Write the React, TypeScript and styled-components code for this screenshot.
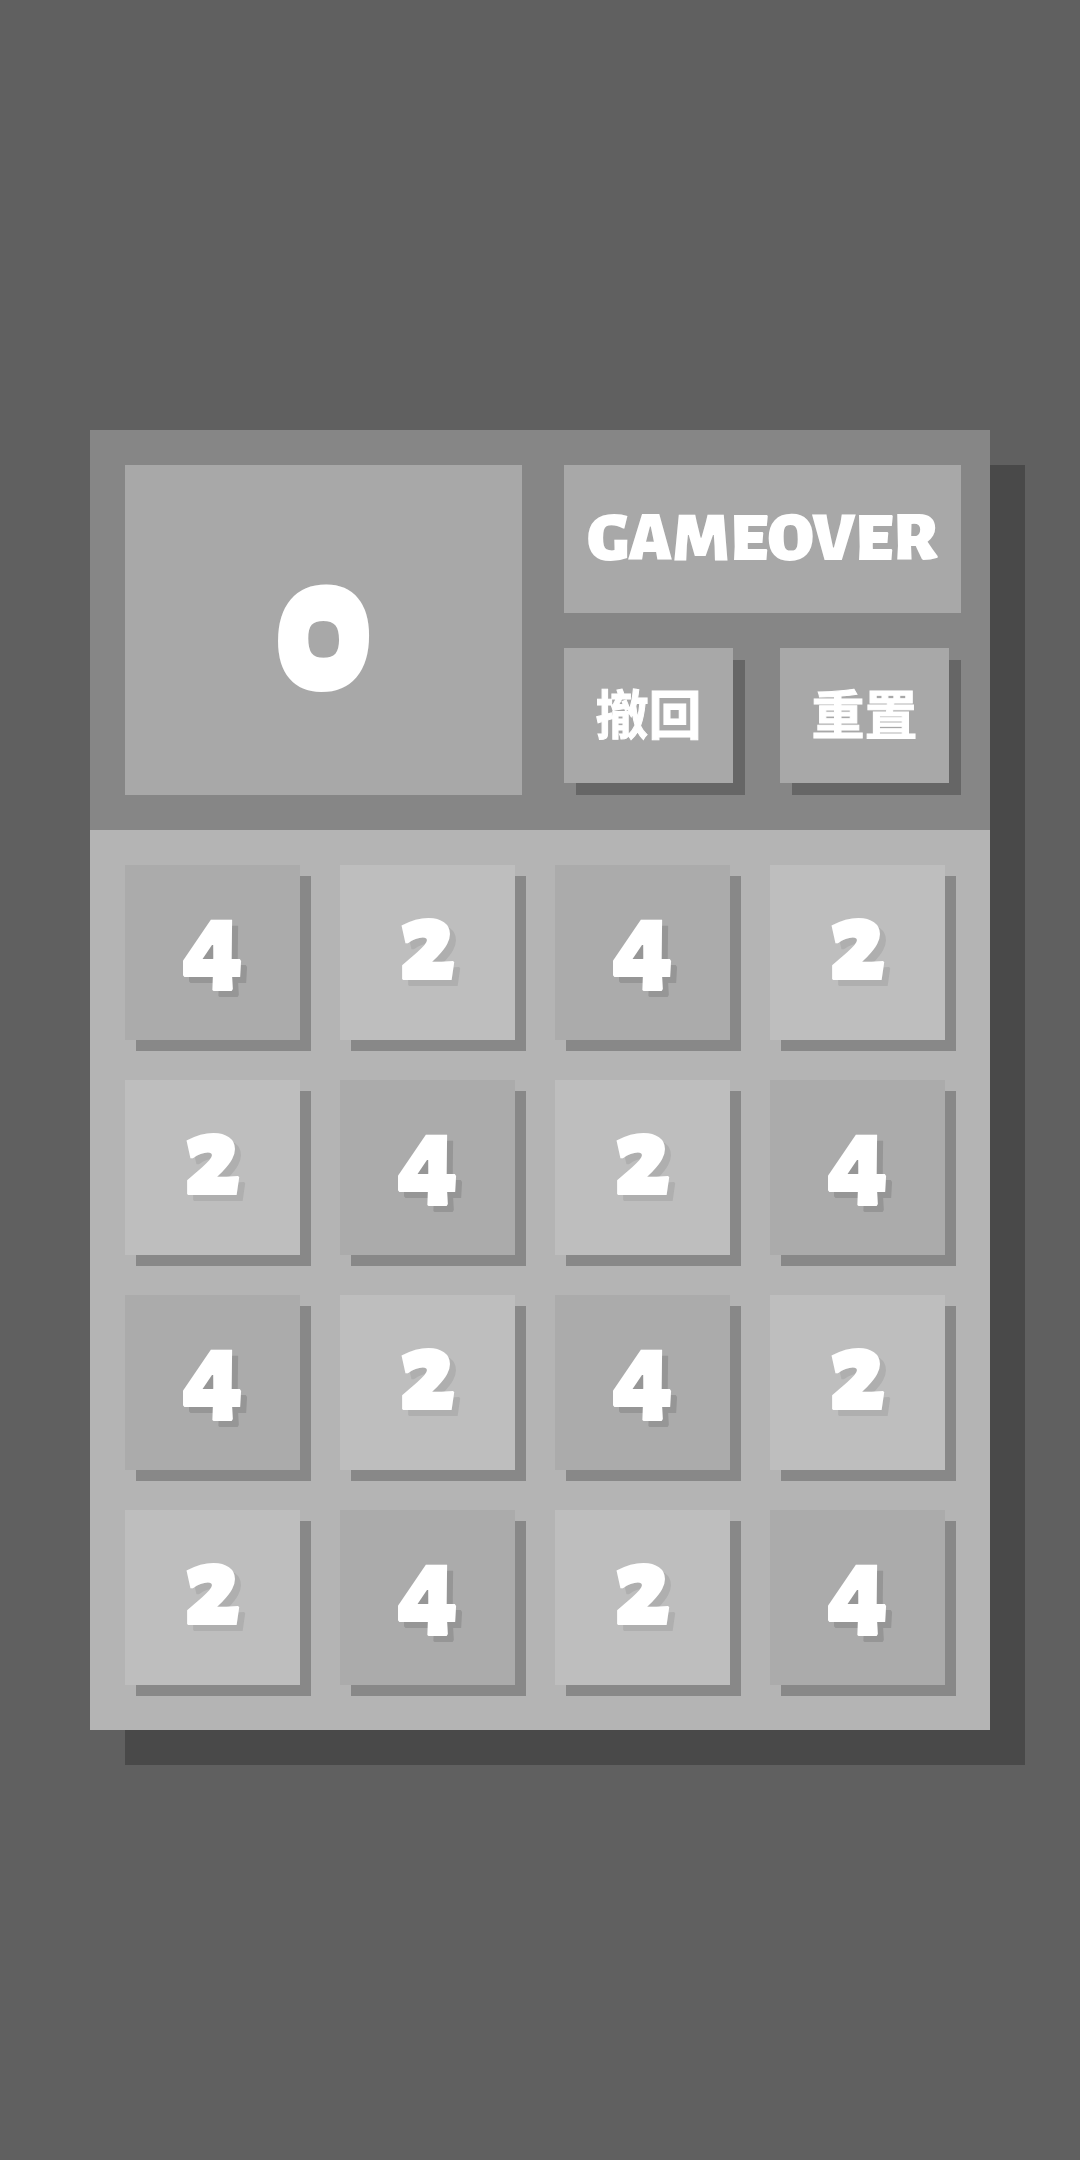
import React, { useState } from "react";
import styled, { createGlobalStyle } from "styled-components";

const GlobalStyle = createGlobalStyle`
  *, *::before, *::after {
    box-sizing: border-box;
  }

  body {
    margin: 0;
    background: #606060;
    color: #ffffff;
    font-family: "Alegreya Sans Black", "Alegreya Sans", "Open Sans", "Noto Sans CJK SC", sans-serif;
    font-weight: 900;
    font-variant-numeric: oldstyle-nums;
  }
`;

const Page = styled.main`
  display: flex;
  align-items: center;
  min-height: 100vh;
  padding: 36px 90px;
`;

const Board = styled.section`
  flex: 1;
  min-width: 0;
  box-shadow: 35px 35px 0 #494949;
`;

const Header = styled.header`
  display: grid;
  grid-template-columns: 1fr 1fr;
  gap: 42px;
  padding: 35px 29px 35px 35px;
  background: #868686;
`;

const Panel = styled.output<{ $size: number }>`
  display: flex;
  align-items: center;
  justify-content: center;
  min-width: 0;
  background: #a8a8a8;
  font-size: ${(p) => p.$size}px;
  line-height: 148px;
`;

const Side = styled.div`
  display: flex;
  flex-direction: column;
  gap: 35px;
  min-width: 0;
`;

const Actions = styled.div`
  display: grid;
  grid-template-columns: 1fr 1fr;
  gap: 47px;
  padding: 0 12px 12px 0;
`;

const ActionButton = styled.button`
  height: 135px;
  padding: 8px 0 0;
  border: 0;
  background: #a8a8a8;
  box-shadow: 12px 12px 0 #666666;
  color: inherit;
  font: inherit;
  font-size: 53px;
  font-weight: 700;
  line-height: 80px;
  -webkit-text-stroke: 1px #ffffff;
  cursor: pointer;
`;

const Grid = styled.div`
  display: grid;
  grid-template-columns: repeat(4, 1fr);
  gap: 40px;
  padding: 35px 45px 45px 35px;
  background: #b4b4b4;
`;

const Tile = styled.div<{ $value: number }>`
  display: flex;
  align-items: center;
  justify-content: center;
  aspect-ratio: 1;
  padding-bottom: 16px;
  background: ${(p) => (p.$value === 4 ? "#ababab" : "#bebebe")};
  box-shadow: 11px 11px 0 #888888;
  font-size: 118px;
  line-height: 140px;
  text-shadow: 6px 6px 0 ${(p) => (p.$value === 4 ? "#969696" : "#afafaf")};
`;

const START = [
  [4, 2, 4, 2],
  [2, 4, 2, 4],
  [4, 2, 4, 2],
  [2, 4, 2, 4],
];

export default function App() {
  const [cells, setCells] = useState(START);
  const restart = () => setCells(START);

  return (
    <>
      <GlobalStyle />
      <Page>
        <Board>
          <Header>
            <Panel $size={200}>0</Panel>
            <Side>
              <Panel $size={71}>GAMEOVER</Panel>
              <Actions>
                <ActionButton type="button">撤回</ActionButton>
                <ActionButton type="button" onClick={restart}>
                  重置
                </ActionButton>
              </Actions>
            </Side>
          </Header>
          <Grid>
            {cells.flatMap((row, y) =>
              row.map((value, x) => (
                <Tile key={`${y}-${x}`} $value={value}>
                  {value}
                </Tile>
              ))
            )}
          </Grid>
        </Board>
      </Page>
    </>
  );
}
